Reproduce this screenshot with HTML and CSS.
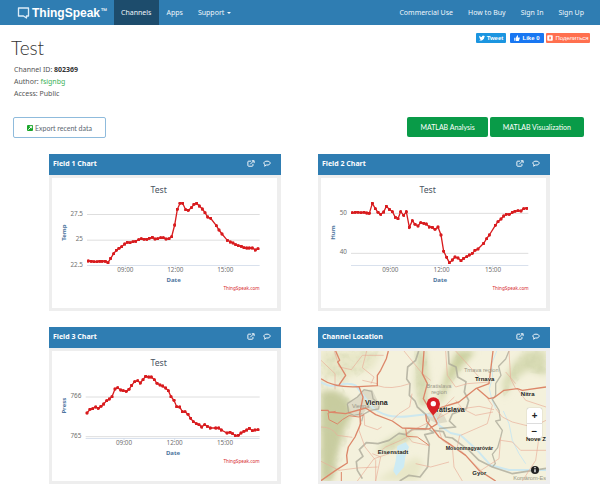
FILE: index.html
```html
<!DOCTYPE html>
<html lang="en">
<head>
<meta charset="utf-8">
<meta name="viewport" content="width=device-width, initial-scale=1">
<title>Test - ThingSpeak</title>
<link rel="stylesheet" href="styles.css">
</head>
<body>
<svg class="defs" aria-hidden="true">
  <defs>
    <marker id="dot" viewBox="0 0 10 10" refX="5" refY="5" markerWidth="10" markerHeight="10" markerUnits="userSpaceOnUse"><circle cx="5" cy="5" r="5" fill="#d81b1e"/></marker>
    <symbol id="external" viewBox="0 0 20 18"><path d="M10 3H4Q2 3 2 5v9q0 2 2 2h9q2 0 2-2v-4M8 11l9-9M12 2h6v6" fill="none" stroke="currentColor" stroke-width="2.400"/></symbol>
    <symbol id="comment" viewBox="0 0 20 18"><path d="M10 3c5 0 8 2 8 5s-3 5-8 5l-2 0-4 3 1-4C3 11 2 10 2 8c0-3 3-5 8-5z" fill="none" stroke="currentColor" stroke-width="2.400"/></symbol>
  </defs>
</svg>
<header class="navbar">
  <a class="brand" href="#"><svg class="logo" viewBox="0 0 38 36" aria-hidden="true"><path d="M4 3h30v24h-6v6l-9-6H4z" fill="none" stroke="#dcecf8" stroke-width="4" stroke-linejoin="round"/></svg><span class="name">ThingSpeak</span><span class="tm">™</span></a>
  <nav class="nav">
    <a class="active" href="#">Channels</a>
    <a href="#">Apps</a>
    <a href="#">Support<span class="caret"></span></a>
  </nav>
  <nav class="nav account">
    <a href="#">Commercial Use</a>
    <a href="#">How to Buy</a>
    <a href="#">Sign In</a>
    <a href="#">Sign Up</a>
  </nav>
</header>
<main>
  <section class="intro">
    <div>
      <h1>Test</h1>
      <ul class="meta">
        <li>Channel ID: <strong>802369</strong></li>
        <li>Author: <a href="#">fsignbg</a></li>
        <li>Access: Public</li>
      </ul>
    </div>
    <div class="share">
      <button class="tweet" type="button"><svg viewBox="0 0 24 24" aria-hidden="true"><path fill="currentColor" d="M24 4.600a10 10 0 0 1-2.800.8 5 5 0 0 0 2.100-2.700 10 10 0 0 1-3.100 1.200 4.900 4.900 0 0 0-8.400 4.500A14 14 0 0 1 1.700 3.100a4.900 4.900 0 0 0 1.500 6.600 5 5 0 0 1-2.200-.6 4.900 4.900 0 0 0 3.900 4.900 5 5 0 0 1-2.200.1 4.900 4.900 0 0 0 4.600 3.400A10 10 0 0 1 0 19.500a14 14 0 0 0 21.500-12.400A10 10 0 0 0 24 4.600z"/></svg>Tweet</button>
      <button class="like" type="button"><svg viewBox="0 0 24 24" aria-hidden="true"><path fill="currentColor" d="M1 11h5v12H1zM8 11l5-10q4 0 3 5l-1 4h7q2 1 1 3l-3 9q-1 2-3 2H8z"/></svg>Like 0</button>
      <button class="post" type="button"><svg viewBox="0 0 24 24" aria-hidden="true"><path fill="currentColor" fill-rule="evenodd" d="M4 1h16q3 0 3 3v16q0 3-3 3H4q-3 0-3-3V4q0-3 3-3zM8 7v10h8V7zM10 9l5 3-5 3z"/></svg>Поделиться</button>
    </div>
  </section>
  <section class="actions">
    <button class="export" type="button"><svg viewBox="0 0 18 18" aria-hidden="true"><rect width="18" height="18" rx="3" fill="#1aa62b"/><path d="M4 14l9-9M8 4h6v6" fill="none" stroke="#fff" stroke-width="3"/></svg>Export recent data</button>
    <div class="matlab">
      <button type="button">MATLAB Analysis</button>
      <button type="button">MATLAB Visualization</button>
    </div>
  </section>
  <section class="panels">
    <article class="panel">
      <header><h2>Field 1 Chart</h2><a href="#" aria-label="Open chart"><svg><use href="#external"/></svg></a><a href="#" aria-label="Comments"><svg><use href="#comment"/></svg></a></header>
      <div class="body">
        <svg class="chart" viewBox="36 84 675 390" role="img" aria-label="Temp by date">
          <path class="grid" d="M141 193.500H659M141 270.500H659"/><path class="axis" d="M141 346.500H659M256 346v7M406 346v7M555 346v7"/>
          <text class="title" x="356" y="129">Test</text>
          <g class="tick end"><text x="129" y="197">27.5</text><text x="129" y="274">25</text><text x="129" y="350">22.5</text></g>
          <g class="tick"><text x="256" y="367">09:00</text><text x="406" y="367">12:00</text><text x="556" y="367">15:00</text></g>
          <text class="label" x="401" y="397">Date</text><text class="label" transform="translate(77 248) rotate(-90)">Temp</text>
          <text class="credit" x="659" y="421">ThingSpeak.com</text>
          <polyline class="line" points="145,333 154,334 162,335 171,335 179,334 187,334 196,334 204,338 212,325 221,311 229,301 237,295 245,290 254,282 262,277 270,278 279,275 287,274 296,269 304,266 312,268 320,268 328,265 337,262 345,267 353,266 362,263 370,263 378,267 387,266 395,260 404,225 412,178 420,160 428,160 437,179 445,181 454,173 462,163 470,160 478,168 487,177 495,188 503,201 512,205 529,227 537,240 546,252 562,271 571,276 579,279 587,284 595,287 604,289 612,293 620,294 628,294 637,294 646,300 654,296"/>
        </svg>
      </div>
    </article>
    <article class="panel">
      <header><h2>Field 2 Chart</h2><a href="#" aria-label="Open chart"><svg><use href="#external"/></svg></a><a href="#" aria-label="Comments"><svg><use href="#comment"/></svg></a></header>
      <div class="body">
        <svg class="chart" viewBox="36 84 675 390" role="img" aria-label="Humidity by date">
          <path class="grid" d="M126 190H658M126 310H658"/><path class="axis" d="M126 346.500H658M244 346v7M397 346v7M551 346v7"/>
          <text class="title" x="356" y="129">Test</text>
          <g class="tick end"><text x="114" y="194">50</text><text x="114" y="313">40</text></g>
          <g class="tick"><text x="244" y="367">09:00</text><text x="398" y="367">12:00</text><text x="552" y="367">15:00</text></g>
          <text class="label" x="393" y="397">Date</text><text class="label" transform="translate(77 248) rotate(-90)">Hum</text>
          <text class="credit" x="659" y="421">ThingSpeak.com</text>
          <polyline class="line" points="130,188 139,187 147,187 156,188 165,187 173,189 181,190 190,160 199,176 207,187 215,193 224,186 232,169 241,178 250,185 259,202 267,206 275,185 284,196 292,185 301,232 310,212 318,223 327,228 335,218 344,220 352,222 361,231 370,232 378,238 387,231 396,255 404,304 413,322 421,338 430,330 438,321 447,324 456,332 464,325 473,320 481,315 490,310 498,301 507,297 524,280 533,266 541,255 559,226 567,215 576,207 584,198 592,193 601,193 610,187 618,184 627,182 636,183 644,176 653,175"/>
        </svg>
      </div>
    </article>
    <article class="panel">
      <header><h2>Field 3 Chart</h2><a href="#" aria-label="Open chart"><svg><use href="#external"/></svg></a><a href="#" aria-label="Comments"><svg><use href="#comment"/></svg></a></header>
      <div class="body">
        <svg class="chart" viewBox="36 92 675 390" role="img" aria-label="Pressure by date">
          <path class="grid" d="M137 230H659M137 349H659"/><path class="axis" d="M137 354.500H659M252 354v7M404 354v7M555 354v7"/>
          <text class="title" x="356" y="137">Test</text>
          <g class="tick end"><text x="124" y="234">766</text><text x="124" y="353">765</text></g>
          <g class="tick"><text x="252" y="374">09:00</text><text x="404" y="374">12:00</text><text x="555" y="374">15:00</text></g>
          <text class="label" x="399" y="404">Date</text><text class="label" transform="translate(77 256) rotate(-90)">Press</text>
          <text class="credit" x="659" y="429">ThingSpeak.com</text>
          <polyline class="line" points="141,278 150,267 158,265 167,260 175,264 183,258 191,251 200,241 208,236 216,229 225,206 233,202 242,209 250,211 259,213 267,207 275,195 284,184 293,181 301,188 309,178 317,168 326,170 334,170 343,178 351,189 360,194 368,197 377,203 385,211 393,229 402,240 410,259 419,260 427,274 435,274 444,282 452,294 460,304 469,310 477,313 485,320 494,313 502,318 511,323 527,323 536,323 544,329 561,338 570,336 578,340 586,346 595,345 603,338 612,333 620,329 628,324 637,331 645,329 654,328"/>
        </svg>
      </div>
    </article>
    <article class="panel">
      <header><h2>Channel Location</h2><a href="#" aria-label="Open map"><svg><use href="#external"/></svg></a><a href="#" aria-label="Comments"><svg><use href="#comment"/></svg></a></header>
      <div class="body map">
        <svg class="chart" viewBox="36 92 675 390" role="img" aria-label="Map of the channel location">
          <defs>
            <filter id="soft" x="-20%" y="-20%" width="140%" height="140%"><feGaussianBlur stdDeviation="9"/></filter>
            <filter id="relief" x="0" y="0" width="100%" height="100%"><feTurbulence type="fractalNoise" baseFrequency=".035" numOctaves="4" seed="8"/><feColorMatrix values="0 0 0 0 .58  0 0 0 0 .62  0 0 0 0 .38  1.800 0 0 0 -.75"/><feComposite in2="SourceGraphic" operator="in"/><feGaussianBlur stdDeviation="2"/></filter>
          </defs>
          <rect x="36" y="92" width="675" height="390" fill="#f4f1dc"/>
          <g fill="#d8dbb4" filter="url(#soft)">
            <path d="M36 213L80 210 120 240 130 280 105 330 85 400 70 482H36z" fill="#c8cc9f"/>
            <path d="M36 92H220L190 145 120 170 60 180 36 160z" fill="#e8e7c8"/>
            <path d="M325 92H350L360 180 350 260 332 260 318 190z"/>
            <path d="M388 240L415 150 445 92H500L452 145 418 195 393 255z" fill="#cbd09f"/>
            <path d="M580 185L612 130 650 92H711V165L655 150 610 185 585 235z"/>
            <path d="M225 365L290 330 318 345 255 385 200 400z"/>
            <path d="M320 410L345 425 325 482H200L240 455z" fill="#e8e7c8"/>
          </g>
          <g filter="url(#relief)" opacity=".5"><path d="M36 92H210L180 145 100 200 135 260 120 340 85 482H36zM315 92H355V260L325 250zM390 240L445 92H500L420 200zM580 210L640 92H711V165L650 155 585 230zM200 395L290 340 320 350 250 390z"/></g>
          <g fill="#dedbc7"><path d="M115 250L145 230 165 208 190 208 205 240 210 265 170 270 155 290 130 280z"/><path d="M350 280L380 270 405 285 415 305 385 310 365 300z"/></g>
          <g fill="none" stroke="#cde8ef" stroke-linejoin="round">
            <path stroke-width="6" d="M36 185Q60 202 90 194T140 195Q155 215 170 235T195 266Q225 285 250 288T300 288L350 282 378 290 390 315 425 338 455 345 505 390 545 435 600 449H711"/>
            <path stroke-width="3" d="M563 92L548 130 551 170 541 205 548 235 560 265M583 272L600 310 610 360 630 400 650 430"/>
          </g>
          <path fill="#cdebf4" d="M265 377L290 366 300 380 289 410 285 440 262 466 253 452 260 421z"/>
          <g fill="none" stroke="#a9a797" stroke-width="5" stroke-linejoin="round" opacity=".75">
            <path d="M329 92L320 120 296 140 293 176 303 190 301 225 318 242 325 260 350 282 361 300 350 327 310 327 290 343 270 339 240 360 207 370 172 367 151 388 162 408 142 424 145 450 160 475M361 327L374 337 347 343 361 371 356 440 333 470 300 465 272 482"/>
            <path d="M372 330L403 334 410 350 430 353 480 390 510 420 550 440 610 460 711 444M418 92L420 130 441 140 446 170 471 184 466 215 479 240 472 265 430 281 421 302 440 320 390 325"/>
            <path d="M600 92L590 116 569 138 576 165 560 190 560 225 550 237 570 270 574 299 560 302 580 330 575 350 566 382 550 402 559 430 550 440" stroke-width="4"/>
            <path d="M115 250L145 230 165 208 188 213 192 235 211 250 209 266 185 270 163 282 158 303M115 250L119 278 135 285 160 280" stroke-width="4"/>
          </g>
          <g fill="none" stroke="#e8ad98" stroke-width="2" stroke-linejoin="round">
            <path d="M36 120L78 160 78 207M76 92L91 140 127 148 160 105 224 105M173 92L160 142 195 170 186 190M36 320Q70 320 85 345L130 351M165 280L167 315 205 328 218 320M160 180L205 190M155 285L150 330 168 380 200 420 200 482M36 423L90 450 145 443 206 440M205 196Q245 210 302 190M309 220L302 260 270 280 250 300M285 92L340 160 365 180M205 400L230 380 275 360 295 350M190 400L215 410 200 482M145 482L195 415 240 400M360 306L290 340 310 365 361 376M380 305L410 255 436 230M440 240L460 265 510 258 555 268M385 295L450 260 500 285 552 275M410 92L415 165 440 200 475 190 540 185M440 92L510 170M625 205L650 240 711 260M590 155L620 190M560 265L580 290 610 305 670 320 711 300M536 235L550 255 535 310 455 345M575 360L610 365 635 390 711 390M452 345L445 380 515 450M516 450L570 415 575 350M600 92L605 175 620 205M390 330L400 360 430 380 435 440 460 482M640 482L680 420 690 350M320 430L365 440 420 425"/>
          </g>
          <g fill="none" stroke="#dc8669" stroke-width="4" stroke-linejoin="round">
            <path d="M36 175Q75 203 150 199L162 230 152 280 155 310 138 350 118 380 113 405 115 428 80 450 36 481M238 92L232 115 215 150 205 165 205 196 150 199M80 92L92 120 86 125 110 165 90 194M36 270L57 270 60 275 110 280 170 263 200 283 250 302 280 323 360 326M345 92L340 160 355 190 343 235 370 280 385 310M385 265L450 245 500 205 540 190 552 92M505 205L540 235 555 232 585 210 625 205 640 210 711 200M350 282L353 303 375 330 390 350 420 370 470 405 510 450 560 482M360 326L385 310"/>
            <path d="M165 283L150 290 120 286 100 298 85 311 60 298 57 278 80 273M97 482V455M290 323L293 348 325 350 360 375" stroke-width="3"/>
          </g>
          <g class="region"><text x="155" y="264">Vienna</text><text x="390" y="202">Bratislava</text><text x="390" y="220">region</text><text x="517" y="154">Trnava region</text></g>
          <g class="city"><text class="big" x="202" y="255">Vienna</text><text class="big" x="417" y="275">Bratislava</text><text x="527" y="181">Trnava</text><text x="656" y="227">Nitra</text><text x="252" y="400">Eisenstadt</text><text class="small" x="481" y="388">Mosonmagyaróvár</text><text x="511" y="463">Gyor</text><text x="681" y="362">Nové Z</text></g>
          <text class="region" x="662" y="479">Komárom-Es</text>
          <path d="M373 285Q354 266 353 251a20 20 0 1 1 40 0Q392 266 373 285z" fill="#d81f26"/><circle cx="373" cy="250" r="8" fill="#fff"/>
          <circle cx="678" cy="449" r="12" fill="#222"/><path d="M678 447v9M678 440v4" stroke="#fff" stroke-width="4"/>
        </svg>
        <div class="zoom"><button type="button" aria-label="Zoom in">+</button><button type="button" aria-label="Zoom out">−</button></div>
      </div>
    </article>
  </section>
</main>
</body>
</html>
```
FILE: styles.css
```css
* { box-sizing: border-box; }
body { margin: 0; background: #fff; color: #555; font: 7px/12px "Noto Sans", sans-serif; }
a { color: inherit; text-decoration: none; }
button { margin: 0; padding: 0; border: 0; font: inherit; }
.defs { position: absolute; width: 0; height: 0; }

.navbar { display: flex; height: 25px; padding: 0 8px 0 17px; background: #2f7db2; color: #f0f7fc; }
.brand { display: flex; align-items: center; width: 97px; color: #fff; }
.logo { width: 13px; height: 12px; margin-right: 2px; }
.name { font: bold 12px/24px "Liberation Sans", sans-serif; }
.tm { padding: 0 0 4px 1px; font-size: 8px; }
.nav { display: flex; }
.nav a { padding: 0 8px 0 7px; line-height: 25px; }
.nav .active { background: #1d4c6c; }
.account { margin-left: auto; }
.caret { display: inline-block; margin-left: 3px; vertical-align: middle; border: 2px solid transparent; border-top-color: currentColor; border-bottom: 0; }

.intro { display: flex; justify-content: space-between; padding: 8px 10px 0 11px; }
h1 { margin: 4px 0 5px; font: 300 19px/22px Lato, sans-serif; color: #333; }
.meta { margin: 0 0 0 3px; padding: 0; list-style: none; }
.meta strong { color: #333; }
.meta a { color: #3cb257; }
.share { display: flex; gap: 2px; height: 10px; font: bold 6px/10px "Liberation Sans", sans-serif; }
.share button { display: flex; align-items: center; justify-content: center; gap: 2px; width: 34px; border-radius: 1px; color: #fff; }
.share svg { width: 6px; height: 6px; }
.share .tweet { width: 30px; margin-right: 2px; background: #1b95e0; }
.share .like { background: #1877f2; }
.share .post { width: 44px; background: #ff704f; font-weight: normal; }

.actions { display: flex; justify-content: space-between; padding: 17px 16px 0 13px; font-family: Lato, sans-serif; }
.export { display: flex; align-items: center; justify-content: center; gap: 2px; width: 93px; height: 21px; border: 1px solid #8fbbdc; border-radius: 2px; background: #fff; color: #5b6670; }
.export svg { width: 6px; height: 6px; }
.matlab { display: flex; gap: 2px; }
.matlab button { height: 20px; padding: 0 13px; border-radius: 2px; background: #099b48; color: #fff; }

.panels { display: grid; grid-template-columns: repeat(2, 1fr); gap: 16px 37px; padding: 16px 50px 9px 49px; }
.panel { background: #eee; }
.panel header { display: flex; align-items: center; gap: 8px; height: 21px; padding: 0 10px 2px 4px; background: #2f7db2; color: #fff; }
.panel h2 { flex: 1; margin: 0; font: bold 7px/12px "Open Sans", sans-serif; }
.panel header a, .panel header svg { display: block; width: 8px; height: 7px; }
.body { padding: 3px 4px 3px 3px; }
.chart { display: block; width: 100%; height: auto; background: #fff; }
.chart text { font-family: "Noto Sans", sans-serif; text-anchor: middle; }
.grid { fill: none; stroke: #dedede; stroke-width: 3; }
.axis { fill: none; stroke: #c5d2e4; stroke-width: 2; }
.chart .title { font-size: 26px; fill: #4c5563; }
.tick { font-size: 19px; fill: #707070; }
.chart .tick.end text { text-anchor: end; }
.label { font-size: 18px; font-weight: bold; fill: #4d759e; }
.chart .credit { font-size: 14px; fill: #d72b30; text-anchor: end; }
.line { fill: none; stroke: #d81b1e; stroke-width: 4; marker-start: url(#dot); marker-mid: url(#dot); marker-end: url(#dot); }

.map { position: relative; }
.chart .region, .region text { font-family: "Liberation Sans", sans-serif; font-size: 17px; fill: #999686; }
.city text { font: bold 18px "Liberation Sans", sans-serif; fill: #222; stroke: #f8f5df; stroke-width: 2px; paint-order: stroke; }
.city .big { font-size: 21px; }
.city .small { font-size: 16px; }
.zoom { position: absolute; right: 8px; bottom: 46px; width: 15px; border-radius: 2px; background: #fff; box-shadow: 0 0 1px #888; }
.zoom button { display: block; width: 100%; height: 15px; background: none; color: #222; font: bold 10px/15px "Noto Sans", sans-serif; }
.zoom button + button { border-top: 1px solid #ddd; }
```
